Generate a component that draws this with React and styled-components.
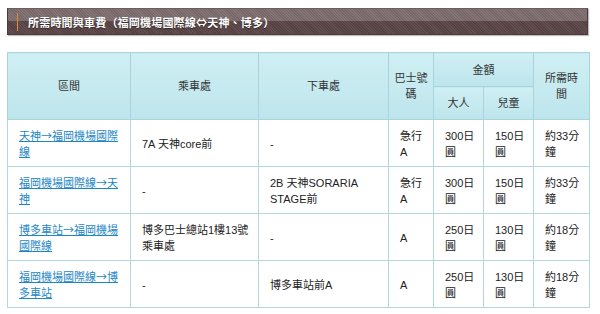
import React from "react";
import styled, { createGlobalStyle } from "styled-components";

const Global = createGlobalStyle`
  html, body { margin: 0; padding: 0; background: #fff; }
  body { font-family: "Liberation Sans", "Noto Sans CJK TC", sans-serif; }
`;

const Page = styled.div`
  padding: 8px 12px 0 7px;
  width: 581px;
`;

const TitleBar = styled.div`
  height: 27px;
  box-sizing: border-box;
  display: flex;
  align-items: center;
  gap: 10px;
  padding-left: 9px;
  border: 1px solid #4b3a3b;
  border-top-color: #6e5d5e;
  background:
    repeating-linear-gradient(45deg, rgba(255,255,255,0.05) 0 1px, rgba(0,0,0,0.05) 1px 2px),
    linear-gradient(#7d6d6e 0 50%, #5a4546 50% 100%);
  box-shadow: 1px 1px 1px rgba(0,0,0,0.25);
`;

const Accent = styled.span`
  width: 1px;
  height: 18px;
  background: #e08c3c;
`;

const Title = styled.h2`
  margin: 0;
  font-size: 11px;
  font-weight: bold;
  color: #fff;
  letter-spacing: 0.2px;
  text-shadow: 0 1px 1px rgba(0,0,0,0.5);
`;

const Arrow = styled.span`
  font-family: "Noto Sans CJK TC", sans-serif;
`;

const Table = styled.table`
  margin-top: 17px;
  width: 582px;
  border-collapse: collapse;
  table-layout: fixed;
  font-size: 11px;
  color: #222;
  border: 1px solid #b2d8de;
`;

const Th = styled.th`
  font-weight: normal;
  color: #333;
  text-align: center;
  vertical-align: middle;
  line-height: 16px;
  padding: 0 ${(p) => p.$px ?? 5}px;
  height: ${(p) => p.$h ?? 32}px;
  border: 1px solid #a9d4dc;
  background: linear-gradient(#cfeff3, #bde5ec);
`;

const Td = styled.td`
  vertical-align: middle;
  line-height: 16px;
  height: 32px;
  padding: 7px ${(p) => p.$pr ?? 6}px 6px 11px;
  border: 1px solid #b2d8de;
  line-break: strict;
`;

const RouteLink = styled.a`
  color: #1c86c6;
  text-decoration: underline;
  cursor: pointer;
`;

const rows = [
  { from: "天神", to: "福岡機場國際線", board: "7A 天神core前", alight: "-", bus: "急行A", adult: "300日圓", child: "150日圓", time: "約33分鐘" },
  { from: "福岡機場國際線", to: "天神", board: "-", alight: "2B 天神SORARIA STAGE前", bus: "急行A", adult: "300日圓", child: "150日圓", time: "約33分鐘" },
  { from: "博多車站", to: "福岡機場國際線", board: "博多巴士總站1樓13號乘車處", alight: "-", bus: "A", adult: "250日圓", child: "130日圓", time: "約18分鐘" },
  { from: "福岡機場國際線", to: "博多車站", board: "-", alight: "博多車站前A", bus: "A", adult: "250日圓", child: "130日圓", time: "約18分鐘" },
];

export default function App() {
  return (
    <Page>
      <Global />
      <TitleBar>
        <Accent />
        <Title>所需時間與車費（福岡機場國際線<Arrow>⇔</Arrow>天神、博多）</Title>
      </TitleBar>
      <Table>
        <colgroup>
          <col style={{ width: 123 }} />
          <col style={{ width: 128 }} />
          <col style={{ width: 130 }} />
          <col style={{ width: 45 }} />
          <col style={{ width: 50 }} />
          <col style={{ width: 50 }} />
          <col style={{ width: 56 }} />
        </colgroup>
        <thead>
          <tr>
            <Th rowSpan={2}>區間</Th>
            <Th rowSpan={2}>乘車處</Th>
            <Th rowSpan={2}>下車處</Th>
            <Th rowSpan={2}>巴士號碼</Th>
            <Th colSpan={2} $h={33}>金額</Th>
            <Th rowSpan={2} $px={10}>所需時間</Th>
          </tr>
          <tr>
            <Th>大人</Th>
            <Th>兒童</Th>
          </tr>
        </thead>
        <tbody>
          {rows.map((r) => (
            <tr key={r.from + r.to}>
              <Td>
                <RouteLink>
                  {r.from}
                  <Arrow>→</Arrow>
                  {r.to}
                </RouteLink>
              </Td>
              <Td>{r.board}</Td>
              <Td>{r.alight}</Td>
              <Td $pr={8}>{r.bus}</Td>
              <Td>{r.adult}</Td>
              <Td>{r.child}</Td>
              <Td>{r.time}</Td>
            </tr>
          ))}
        </tbody>
      </Table>
    </Page>
  );
}
